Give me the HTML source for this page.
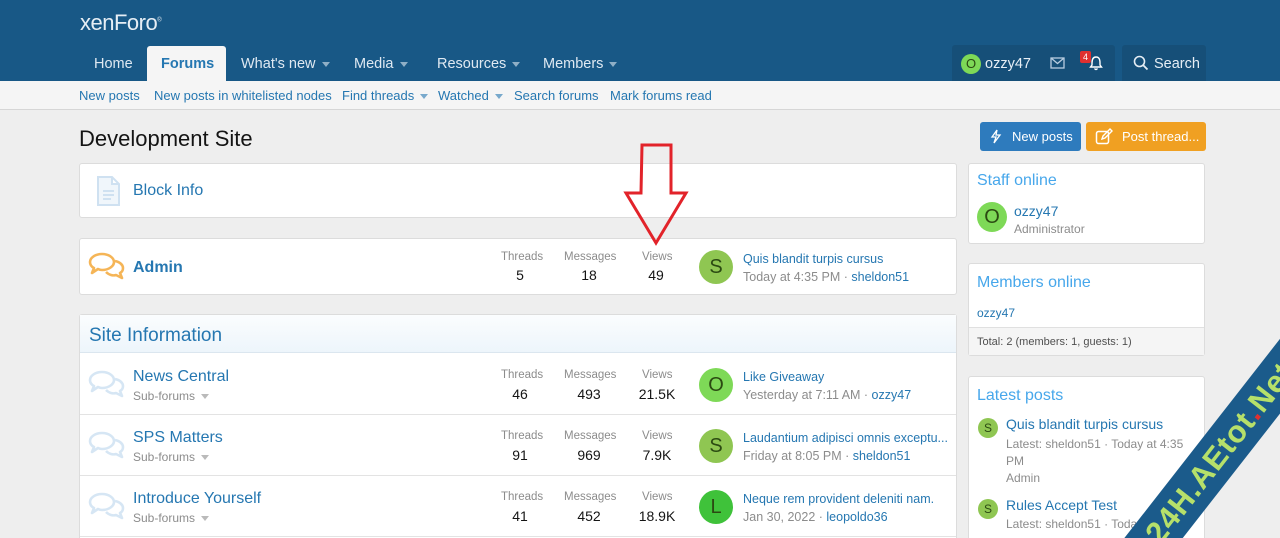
<!DOCTYPE html>
<html style="width:1280px;height:538px;overflow:hidden"><head><meta charset="utf-8"><style>
*{box-sizing:border-box;margin:0;padding:0}
body{width:1280px;height:538px;overflow:hidden;background:#eeeeee;font-family:"Liberation Sans",Arial,sans-serif;position:relative;color:#141414}
.a{position:absolute;white-space:nowrap}
.hdr{position:absolute;left:0;top:0;width:1280px;height:81px;background:#185886}
.nav{color:#dfe9f2;font-size:14.5px;top:55px}
.sub{position:absolute;top:81px;left:0;width:1280px;height:29px;background:#f5f5f5;border-bottom:1px solid #d6d6d6}
.sl{color:#2577b1;font-size:13px;top:88px}
.box{position:absolute;background:#fff;border:1px solid #dcdcdc;border-radius:3px}
.lk{color:#2577b1}
.gl{color:#8c8c8c;font-size:11.5px}
.num{font-size:14px;color:#141414;text-align:center}
.av{position:absolute;width:34px;height:34px;border-radius:50%;text-align:center;line-height:34px;font-size:20px;color:#2b4a12}
.caret{display:inline-block;width:0;height:0;border-left:4px solid transparent;border-right:4px solid transparent;border-top:5px solid currentColor;vertical-align:middle;margin-left:6px;opacity:.6}
</style></head><body>
<div class="hdr"></div>
<div class="a" style="left:80px;top:10px;font-size:22px;color:#e6eef5;letter-spacing:-0.5px">xenForo<sup style="font-size:6px">®</sup></div>
<div class="a" style="left:147px;top:46px;width:79px;height:36px;background:#f5f5f5;border-radius:3px 3px 0 0"></div>
<div class="a nav" style="left:94px;top:56px">Home</div>
<div class="a nav" style="left:161px;top:56px;color:#2577b1;font-weight:bold">Forums</div>
<div class="a nav" style="left:241px;top:56px">What's new<span class="caret"></span></div>
<div class="a nav" style="left:354px;top:56px">Media<span class="caret"></span></div>
<div class="a nav" style="left:437px;top:56px">Resources<span class="caret"></span></div>
<div class="a nav" style="left:543px;top:56px">Members<span class="caret"></span></div>
<div class="a" style="left:952px;top:45px;width:163px;height:36px;background:#164f78;border-radius:3px 3px 0 0"></div>
<div class="a" style="left:1122px;top:45px;width:84px;height:36px;background:#164f78;border-radius:3px 3px 0 0"></div>
<div class="a" style="left:961px;top:54px;width:20px;height:20px;border-radius:50%;background:#7ed957;color:#2b4a12;font-size:13px;text-align:center;line-height:20px">O</div>
<div class="a nav" style="left:985px;top:56px;color:#e6eef5">ozzy47</div>
<svg class="a" style="left:1050px;top:57px" width="15" height="12"><rect x="1" y="1" width="13" height="10" fill="none" stroke="#b8cde0" stroke-width="1.3"/><path d="M1 1 L7.5 6.5 L14 1" fill="none" stroke="#b8cde0" stroke-width="1.3"/></svg>
<div class="a" style="left:1080px;top:51px;width:11px;height:12px;background:#e03030;color:#fff;font-size:9px;text-align:center;line-height:12px;border-radius:2px">4</div>
<svg class="a" style="left:1089px;top:55px" width="14" height="16"><path d="M7 2 C3.5 2 3 5 3 8 L3 10 L1.5 12 L12.5 12 L11 10 L11 8 C11 5 10.5 2 7 2Z M5.5 13.5 Q7 15.5 8.5 13.5" fill="none" stroke="#fff" stroke-width="1.4"/></svg>
<svg class="a" style="left:1133px;top:55px" width="16" height="16"><circle cx="6.5" cy="6.5" r="5" fill="none" stroke="#e6eef5" stroke-width="1.6"/><path d="M10 10 L14.5 14.5" stroke="#e6eef5" stroke-width="1.8"/></svg>
<div class="a nav" style="left:1154px;top:56px;color:#e6eef5">Search</div>
<div class="sub"></div>
<div class="a sl" style="left:79px">New posts</div>
<div class="a sl" style="left:154px">New posts in whitelisted nodes</div>
<div class="a sl" style="left:342px">Find threads<span class="caret"></span></div>
<div class="a sl" style="left:438px">Watched<span class="caret"></span></div>
<div class="a sl" style="left:514px">Search forums</div>
<div class="a sl" style="left:610px">Mark forums read</div>

<div class="a" style="left:79px;top:126px;font-size:22px;color:#141414">Development Site</div>
<div class="a" style="left:980px;top:122px;width:101px;height:29px;background:#2e7bbd;border-radius:3px;color:#fff;font-size:13px;line-height:29px;padding-left:32px">New posts</div>
<svg class="a" style="left:990px;top:129px" width="12" height="15"><path d="M7 1 L2 8 L6 8 L4 14 L10 6 L6 6 Z" fill="none" stroke="#fff" stroke-width="1.3"/></svg>
<div class="a" style="left:1086px;top:122px;width:120px;height:29px;background:#f0a022;border-radius:3px;color:#fff;font-size:13px;line-height:29px;padding-left:36px">Post thread...</div>
<svg class="a" style="left:1095px;top:128px" width="18" height="17"><rect x="1.5" y="3.5" width="12" height="12" rx="2" fill="none" stroke="#fff" stroke-width="1.5"/><path d="M7 11 L8 8 L15 1 L17 3 L10 10 Z" fill="none" stroke="#fff" stroke-width="1.4"/></svg>

<div class="box" style="left:79px;top:163px;width:878px;height:55px"></div>
<svg class="a" style="left:96px;top:175px" width="26" height="32"><path d="M2 2 L16 2 L23 9 L23 30 L2 30 Z M16 2 L16 9 L23 9 M7 16 L18 16 M7 20 L18 20 M7 24 L15 24" fill="#f0f6fb" stroke="#cfe1f1" stroke-width="2"/></svg>
<div class="a lk" style="left:133px;top:182px;font-size:16px">Block Info</div>

<div class="box" style="left:79px;top:238px;width:878px;height:57px"></div>
<svg class="a" style="left:88px;top:251px" width="38" height="30"><path d="M14 3 C7 3 2 7 2 11 C2 14 4 16 6 17 L4 22 L10 18 C11 18.5 13 19 14 19 C21 19 26 15 26 11 C26 7 21 3 14 3Z M27 10 C32 11 35 14 35 17 C35 19 34 21 32 22 L34 27 L28 24 C25 25 21 24 18 21" fill="none" stroke="#f5b557" stroke-width="2.6" stroke-linejoin="round"/></svg>
<div class="a lk" style="left:133px;top:259px;font-size:16px;font-weight:bold">Admin</div>

<div class="box" style="left:79px;top:314px;width:878px;height:240px"></div>
<div class="a" style="left:80px;top:315px;width:876px;height:38px;background:linear-gradient(#fbfdfe,#edf5fb);border-bottom:1px solid #dbe6ef"></div>
<div class="a lk" style="left:89px;top:325px;font-size:19px">Site Information</div>
<div class="a" style="left:80px;top:414px;width:876px;height:1px;background:#e3e3e3"></div>
<div class="a" style="left:80px;top:475px;width:876px;height:1px;background:#e3e3e3"></div>
<div class="a" style="left:80px;top:536px;width:876px;height:1px;background:#e3e3e3"></div>

<div class="a gl" style="left:501px;top:251px">Threads</div><div class="a num" style="left:500px;top:267px;width:40px">5</div>
<div class="a gl" style="left:564px;top:251px">Messages</div><div class="a num" style="left:569px;top:267px;width:40px">18</div>
<div class="a gl" style="left:642px;top:251px">Views</div><div class="a num" style="left:636px;top:267px;width:40px">49</div>
<div class="av" style="left:699px;top:250px;background:#8fc652">S</div>
<div class="a lk" style="left:743px;top:252px;font-size:12.5px">Quis blandit turpis cursus</div>
<div class="a" style="left:743px;top:270px;font-size:12.5px;color:#8c8c8c">Today at 4:35 PM · <span class="lk">sheldon51</span></div>

<svg class="a" style="left:88px;top:369px" width="38" height="30"><path d="M14 3 C7 3 2 7 2 11 C2 14 4 16 6 17 L4 22 L10 18 C11 18.5 13 19 14 19 C21 19 26 15 26 11 C26 7 21 3 14 3Z M27 10 C32 11 35 14 35 17 C35 19 34 21 32 22 L34 27 L28 24 C25 25 21 24 18 21" fill="none" stroke="#d6e6f4" stroke-width="2.6" stroke-linejoin="round"/></svg>
<div class="a lk" style="left:133px;top:368px;font-size:16px">News Central</div>
<div class="a gl" style="left:133px;top:389px;font-size:12px">Sub-forums<span class="caret"></span></div>
<div class="a gl" style="left:501px;top:369px">Threads</div><div class="a num" style="left:500px;top:386px;width:40px">46</div>
<div class="a gl" style="left:564px;top:369px">Messages</div><div class="a num" style="left:569px;top:386px;width:40px">493</div>
<div class="a gl" style="left:642px;top:369px">Views</div><div class="a num" style="left:636px;top:386px;width:42px">21.5K</div>
<div class="av" style="left:699px;top:368px;background:#7ed957">O</div>
<div class="a lk" style="left:743px;top:370px;font-size:12.5px">Like Giveaway</div>
<div class="a" style="left:743px;top:388px;font-size:12.5px;color:#8c8c8c">Yesterday at 7:11 AM · <span class="lk">ozzy47</span></div>

<svg class="a" style="left:88px;top:430px" width="38" height="30"><path d="M14 3 C7 3 2 7 2 11 C2 14 4 16 6 17 L4 22 L10 18 C11 18.5 13 19 14 19 C21 19 26 15 26 11 C26 7 21 3 14 3Z M27 10 C32 11 35 14 35 17 C35 19 34 21 32 22 L34 27 L28 24 C25 25 21 24 18 21" fill="none" stroke="#d6e6f4" stroke-width="2.6" stroke-linejoin="round"/></svg>
<div class="a lk" style="left:133px;top:429px;font-size:16px">SPS Matters</div>
<div class="a gl" style="left:133px;top:450px;font-size:12px">Sub-forums<span class="caret"></span></div>
<div class="a gl" style="left:501px;top:430px">Threads</div><div class="a num" style="left:500px;top:447px;width:40px">91</div>
<div class="a gl" style="left:564px;top:430px">Messages</div><div class="a num" style="left:569px;top:447px;width:40px">969</div>
<div class="a gl" style="left:642px;top:430px">Views</div><div class="a num" style="left:636px;top:447px;width:42px">7.9K</div>
<div class="av" style="left:699px;top:429px;background:#8fc652">S</div>
<div class="a lk" style="left:743px;top:431px;font-size:12.5px">Laudantium adipisci omnis exceptu...</div>
<div class="a" style="left:743px;top:449px;font-size:12.5px;color:#8c8c8c">Friday at 8:05 PM · <span class="lk">sheldon51</span></div>

<svg class="a" style="left:88px;top:491px" width="38" height="30"><path d="M14 3 C7 3 2 7 2 11 C2 14 4 16 6 17 L4 22 L10 18 C11 18.5 13 19 14 19 C21 19 26 15 26 11 C26 7 21 3 14 3Z M27 10 C32 11 35 14 35 17 C35 19 34 21 32 22 L34 27 L28 24 C25 25 21 24 18 21" fill="none" stroke="#d6e6f4" stroke-width="2.6" stroke-linejoin="round"/></svg>
<div class="a lk" style="left:133px;top:490px;font-size:16px">Introduce Yourself</div>
<div class="a gl" style="left:133px;top:511px;font-size:12px">Sub-forums<span class="caret"></span></div>
<div class="a gl" style="left:501px;top:491px">Threads</div><div class="a num" style="left:500px;top:508px;width:40px">41</div>
<div class="a gl" style="left:564px;top:491px">Messages</div><div class="a num" style="left:569px;top:508px;width:40px">452</div>
<div class="a gl" style="left:642px;top:491px">Views</div><div class="a num" style="left:636px;top:508px;width:42px">18.9K</div>
<div class="av" style="left:699px;top:490px;background:#3fc23a">L</div>
<div class="a lk" style="left:743px;top:492px;font-size:12.5px">Neque rem provident deleniti nam.</div>
<div class="a" style="left:743px;top:510px;font-size:12.5px;color:#8c8c8c">Jan 30, 2022 · <span class="lk">leopoldo36</span></div>

<div class="box" style="left:968px;top:163px;width:237px;height:81px"></div>
<div class="a" style="left:977px;top:172px;font-size:16px;color:#47a7eb">Staff online</div>
<div class="av" style="left:977px;top:202px;width:30px;height:30px;line-height:30px;background:#7ed957">O</div>
<div class="a lk" style="left:1014px;top:203px;font-size:14px">ozzy47</div>
<div class="a" style="left:1014px;top:222px;font-size:12px;color:#8c8c8c">Administrator</div>

<div class="box" style="left:968px;top:263px;width:237px;height:93px"></div>
<div class="a" style="left:977px;top:274px;font-size:16px;color:#47a7eb">Members online</div>
<div class="a lk" style="left:977px;top:306px;font-size:12px">ozzy47</div>
<div class="a" style="left:969px;top:327px;width:235px;height:28px;background:#f5f5f5;border-top:1px solid #e0e0e0"></div>
<div class="a" style="left:977px;top:336px;font-size:11px;color:#505050">Total: 2 (members: 1, guests: 1)</div>

<div class="box" style="left:968px;top:376px;width:237px;height:180px"></div>
<div class="a" style="left:977px;top:387px;font-size:16px;color:#47a7eb">Latest posts</div>
<div class="av" style="left:978px;top:418px;width:20px;height:20px;line-height:20px;font-size:12px;background:#8fc652">S</div>
<div class="a lk" style="left:1006px;top:416px;font-size:14px">Quis blandit turpis cursus</div>
<div class="a" style="left:1006px;top:436px;font-size:12px;color:#8c8c8c;line-height:17px">Latest: sheldon51 · Today at 4:35<br>PM<br>Admin</div>
<div class="av" style="left:978px;top:499px;width:20px;height:20px;line-height:20px;font-size:12px;background:#8fc652">S</div>
<div class="a lk" style="left:1006px;top:497px;font-size:14px">Rules Accept Test</div>
<div class="a" style="left:1006px;top:517px;font-size:12px;color:#8c8c8c">Latest: sheldon51 · Today at 4:35</div>

<svg class="a" style="left:620px;top:140px" width="75" height="110"><path d="M22 5 L51 5 L51 53 L66 53 L36 103 L6 53 L21 53 Z" fill="none" stroke="#e2232a" stroke-width="3" stroke-linejoin="miter"/></svg>

<div class="a" style="left:1030px;top:430px;width:380px;height:46px;background:#1b5b8b;transform:rotate(-52deg);transform-origin:center;text-align:center;font-size:31px;font-weight:bold;color:#b6e06a;line-height:46px;letter-spacing:1px">24H.AEtot<span style="color:#e03030">.</span>Net</div>
</body></html>
